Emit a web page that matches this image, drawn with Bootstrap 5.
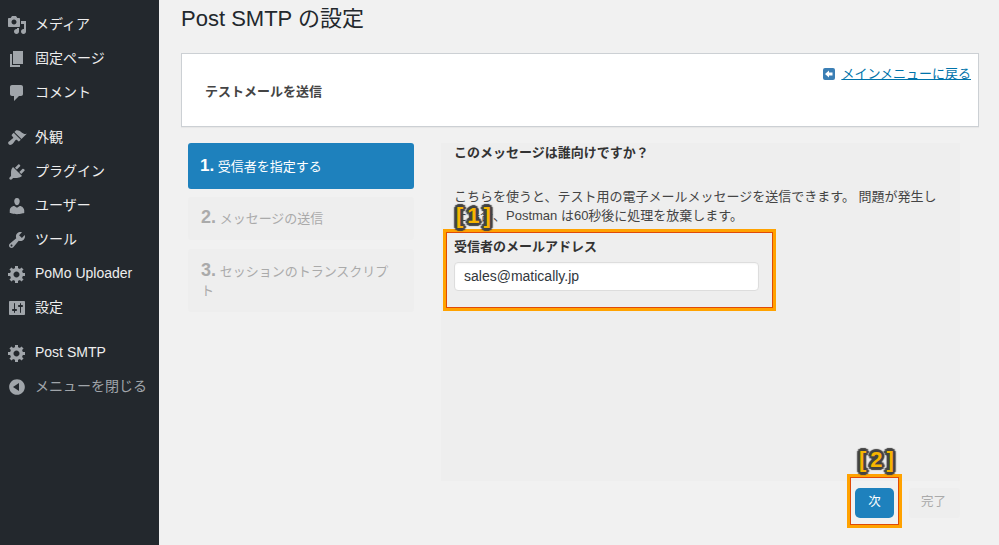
<!DOCTYPE html>
<html lang="ja"><head><meta charset="utf-8"><title>Post SMTP</title>
<link href="https://cdn.jsdelivr.net/npm/bootstrap@5.3.0/dist/css/bootstrap.min.css" rel="stylesheet">
<style>
html,body{height:545px;overflow:hidden}
body{background:#f1f1f1;font-family:"Liberation Sans","Noto Sans CJK JP",sans-serif;font-size:13px;color:#444;line-height:1.4}
.shell{height:545px}
.side{width:159px;background:#23282d;flex:none;padding-top:8px}
.side a{display:flex;align-items:center;height:34px;color:#eee;text-decoration:none;font-size:14px;padding-left:7px}
.side a svg{width:20px;height:20px;flex:none;margin-right:8px;fill:#a0a5aa}
.side .gap{height:11px}
.side a.dim{color:#a0a5aa}
.mainarea{flex:1;min-width:0;padding-left:22px;padding-right:20px;position:relative}
.ttl{font-size:22px;font-weight:400;color:#23282d;margin:0;height:53px;line-height:38px}
.head{background:#fff;border:1px solid #ccd0d4;height:74px;padding:0 8px 0 23px;box-shadow:0 1px 1px rgba(0,0,0,.04);position:relative;display:flex;align-items:center}
.head b{font-size:13px;color:#444;font-weight:700;padding-top:4px}
.back{position:absolute;right:7px;top:11px;display:flex;align-items:center;gap:6px;font-size:13px;color:#0073aa}
.back span{text-decoration:underline}
.back svg{display:block;width:12px;height:12px}
.wiz{margin-top:16px}
.stepcol{width:226px;margin-left:7px;flex:none}
.stp{background:#eee;color:#aaa;border-radius:3px;padding:10px 24px 10px 13px;margin-bottom:8px;font-size:13px;line-height:21px}
.stp strong{font-size:18px;font-weight:700}
.stp.on{background:#1e81bd;color:#fff;height:46px;padding:12px 12px 0}
.stp.on strong{font-size:17px}
.stp.s2{height:43px;padding-top:10px}
.stp.s3{height:63px;padding-top:12px;margin-top:9px;line-height:19px}
.pane{width:519px;margin-left:27px;height:338px;background:#eee;padding:1px 13px 0;position:relative}
.pane h6{font-size:13px;font-weight:700;color:#333;margin:0;line-height:18px}
.pane p{margin:25px 0 0;line-height:19px;color:#444}
.lab{font-weight:700;color:#333;font-size:13px;margin-top:13px;line-height:18px}
.mailbox{display:block;width:305px;height:29px;margin-top:6px;background:#fff;border:1px solid #ddd;border-radius:4px;padding:0 9px;font-size:14px;line-height:27px;color:#32373c;box-shadow:inset 0 1px 2px rgba(0,0,0,.04)}
.btnrow{width:520px;margin-left:259px;display:flex;justify-content:flex-end;gap:15px;padding-top:7px}
.nx{background:#1e81bd;color:#fff;width:39px;height:30px;border:0;border-radius:5px;padding:0;font-size:12.500px}
.dn{background:#eee;color:#aaa;width:51px;height:30px;border:0;border-radius:3px;padding:0 2px 0 0;font-size:12.500px}
.hl{position:absolute;box-shadow:inset 0 0 0 3px #ffa200,inset 0 0 0 4px #e04a08}
.tag{position:absolute;font-family:"Liberation Sans",sans-serif;font-weight:700;font-size:22px;line-height:24px;letter-spacing:4px;color:#f7b500;text-align:center;text-shadow:2px 0 1px #444,-2px 0 1px #444,0 2px 1px #444,0 -2px 1px #444,2px 2px 1px #444,-2px -2px 1px #444,2px -2px 1px #444,-2px 2px 1px #444,3px 0 1px #444,-3px 0 1px #444,0 3px 1px #444,0 -3px 1px #444}
</style></head><body>
<div class="d-flex shell">
<nav class="side">
<a href="#"><svg viewBox="0 0 20 20"><path d="M13 11V4c0-.55-.45-1-1-1h-1.670L9 1H5L3.670 3H2c-.55 0-1 .45-1 1v7c0 .55.45 1 1 1h10c.55 0 1-.45 1-1zM7 4.500c1.380 0 2.500 1.120 2.500 2.500S8.380 9.500 7 9.500 4.500 8.380 4.500 7 5.620 4.500 7 4.500zM14 6h5v10.500c0 1.380-1.120 2.500-2.500 2.500S14 17.880 14 16.500s1.120-2.500 2.500-2.500c.17 0 .34.020.5.050V9h-3V6zm-4 8.050V13h2v3.500c0 1.380-1.120 2.500-2.500 2.500S7 17.880 7 16.500 8.120 14 9.500 14c.17 0 .34.020.5.050z"/></svg>メディア</a>
<a href="#"><svg viewBox="0 0 20 20"><path d="M6 15V2h10v13H6zm-1 1h8v2H3V5h2v11z"/></svg>固定ページ</a>
<a href="#"><svg viewBox="0 0 20 20"><path d="M5 2h9c1.100 0 2 .9 2 2v7c0 1.100-.9 2-2 2h-2l-5 5v-5H5c-1.100 0-2-.9-2-2V4c0-1.100.9-2 2-2z"/></svg>コメント</a>
<div class="gap"></div>
<a href="#"><svg viewBox="0 0 20 20"><path d="M14.480 11.060L7.410 3.990l1.500-1.500c.5-.56 2.300-.47 3.510.32 1.210.8 1.430 1.280 2.910 2.100 1.180.64 2.450 1.260 4.450.85zm-.71.71L6.700 4.700 4.930 6.470c-.39.39-.39 1.020 0 1.410l1.060 1.060c.39.39.39 1.030 0 1.420-.6.6-1.430 1.110-2.210 1.690-.35.26-.7.53-1.010.84C1.430 13.230.4 14.980 1.720 16.300c1.330 1.320 3.070.3 4.400-1.050.3-.31.58-.66.84-1 .57-.79 1.080-1.620 1.690-2.220.39-.39 1.020-.39 1.410 0l1.060 1.060c.39.39 1.020.39 1.410 0z"/></svg>外観</a>
<a href="#"><svg viewBox="0 0 20 20"><path d="M13.110 4.360L9.870 7.600 8 5.730l3.240-3.240c.35-.34 1.050-.2 1.560.32.52.51.66 1.210.31 1.550zm-8 1.770l.91-1.120 9.010 9.010-1.190.84c-.71.71-2.630 1.160-3.820 1.160H6.140L4.900 17.260c-.59.59-1.540.59-2.120 0-.59-.58-.59-1.530 0-2.120l1.240-1.240v-3.880c0-1.130.4-3.190 1.090-3.890zm7.260 3.970l3.240-3.240c.34-.35 1.040-.21 1.550.31.52.51.66 1.210.31 1.550l-3.240 3.250z"/></svg>プラグイン</a>
<a href="#"><svg viewBox="0 0 20 20"><path d="M10 9.250c-2.270 0-2.730-3.440-2.730-3.440C7 4.020 7.820 2 9.970 2c2.160 0 2.980 2.020 2.710 3.810 0 0-.41 3.440-2.680 3.440zm0 2.570L12.720 10c2.390 0 4.520 2.330 4.520 4.530v2.490s-3.650 1.130-7.240 1.130c-3.650 0-7.240-1.130-7.240-1.130v-2.490c0-2.250 1.940-4.480 4.470-4.480z"/></svg>ユーザー</a>
<a href="#"><svg viewBox="0 0 20 20"><path fill-rule="evenodd" d="M16.680 9.770c-1.340 1.340-3.300 1.670-4.950.99l-5.410 6.520c-.99.99-2.590.99-3.580 0s-.99-2.590 0-3.570l6.520-5.420c-.68-1.650-.35-3.610.99-4.950 1.280-1.280 3.120-1.620 4.720-1.060l-2.890 2.890 2.820 2.820 2.860-2.870c.53 1.580.18 3.390-1.080 4.670zM3.810 16.210c.4.39 1.040.39 1.430 0 .4-.4.4-1.040 0-1.430-.39-.4-1.030-.4-1.430 0-.39.39-.39 1.030 0 1.430z"/></svg>ツール</a>
<a href="#"><svg viewBox="0 0 20 20"><path fill-rule="evenodd" d="M18 12h-2.180c-.17.7-.44 1.350-.81 1.930l1.540 1.540-2.100 2.100-1.540-1.540c-.58.36-1.230.63-1.910.79V19H8v-2.180c-.68-.16-1.330-.43-1.910-.79l-1.540 1.540-2.120-2.120 1.540-1.540c-.36-.58-.63-1.230-.79-1.910H1V9.030h2.170c.16-.7.44-1.350.8-1.940L2.430 5.550l2.100-2.100 1.540 1.540c.58-.37 1.240-.64 1.930-.81V2h3v2.180c.68.16 1.330.43 1.910.79l1.540-1.540 2.120 2.120-1.540 1.540c.36.59.64 1.240.8 1.940H18V12zm-8.500 1.500c1.660 0 3-1.340 3-3s-1.340-3-3-3-3 1.340-3 3 1.340 3 3 3z"/></svg>PoMo Uploader</a>
<a href="#"><svg viewBox="0 0 20 20"><path fill-rule="evenodd" d="M18 16V4c0-.55-.45-1-1-1H3c-.55 0-1 .45-1 1v12c0 .55.45 1 1 1h14c.55 0 1-.45 1-1zM8 11h1c.55 0 1 .45 1 1s-.45 1-1 1H8v1.500c0 .28-.22.500-.5.500s-.5-.22-.5-.500V13H6c-.55 0-1-.45-1-1s.45-1 1-1h1V5.500c0-.28.22-.5.5-.5s.5.22.5.500V11zm5-2h-1c-.55 0-1-.45-1-1s.45-1 1-1h1V5.500c0-.28.22-.5.5-.5s.5.22.5.500V7h1c.55 0 1 .45 1 1s-.45 1-1 1h-1v5.500c0 .28-.22.500-.5.500s-.5-.22-.5-.500V9z"/></svg>設定</a>
<div class="gap"></div>
<a href="#"><svg viewBox="0 0 20 20"><path fill-rule="evenodd" d="M18 12h-2.180c-.17.7-.44 1.350-.81 1.930l1.540 1.540-2.100 2.100-1.540-1.540c-.58.36-1.230.63-1.910.79V19H8v-2.180c-.68-.16-1.330-.43-1.910-.79l-1.540 1.540-2.120-2.120 1.540-1.540c-.36-.58-.63-1.230-.79-1.910H1V9.030h2.170c.16-.7.44-1.350.8-1.940L2.430 5.550l2.100-2.100 1.540 1.540c.58-.37 1.240-.64 1.930-.81V2h3v2.180c.68.16 1.330.43 1.910.79l1.540-1.540 2.120 2.120-1.540 1.540c.36.59.64 1.240.8 1.940H18V12zm-8.500 1.500c1.660 0 3-1.340 3-3s-1.340-3-3-3-3 1.340-3 3 1.340 3 3 3z"/></svg>Post SMTP</a>
<a href="#" class="dim"><svg viewBox="0 0 20 20"><path fill-rule="evenodd" d="M10 2.160c4.330 0 7.840 3.510 7.840 7.840s-3.510 7.840-7.840 7.840S2.160 14.330 2.160 10 5.670 2.160 10 2.160zM12 14V6l-6 4z"/></svg>メニューを閉じる</a>
</nav>
<main class="mainarea">
<h1 class="ttl">Post SMTP の設定</h1>
<section class="head"><b>テストメールを送信</b>
<a href="#" class="back text-decoration-none"><svg viewBox="0 0 12 12"><rect width="12" height="12" rx="2" fill="#3b7fb5"/><path d="M6 2.500v2h3.500v3H6v2L2 6z" fill="#fff"/></svg><span>メインメニューに戻る</span></a></section>
<div class="d-flex wiz">
<div class="stepcol">
<div class="stp on"><strong>1.</strong> 受信者を指定する</div>
<div class="stp s2"><strong>2.</strong> メッセージの送信</div>
<div class="stp s3"><strong>3.</strong> セッションのトランスクリプト</div>
</div>
<div class="pane">
<h6>このメッセージは誰向けですか？</h6>
<p>こちらを使うと、テスト用の電子メールメッセージを送信できます。 問題が発生した場合、Postman は60秒後に処理を放棄します。</p>
<div class="lab">受信者のメールアドレス</div>
<span class="mailbox">sales@matically.jp</span>
</div>
</div>
<div class="btnrow"><button class="nx">次</button><button class="dn">完了</button></div>
<div class="hl" style="left:284px;top:229px;width:333px;height:82px"></div>
<div class="tag" style="left:296px;top:204px;width:41px">[1]</div>
<div class="hl" style="left:688px;top:474px;width:55px;height:54px"></div>
<div class="tag" style="left:699px;top:448px;width:41px">[2]</div>
</main>
</div>
<script src="https://cdn.jsdelivr.net/npm/bootstrap@5.3.0/dist/js/bootstrap.bundle.min.js"></script>
</body></html>
